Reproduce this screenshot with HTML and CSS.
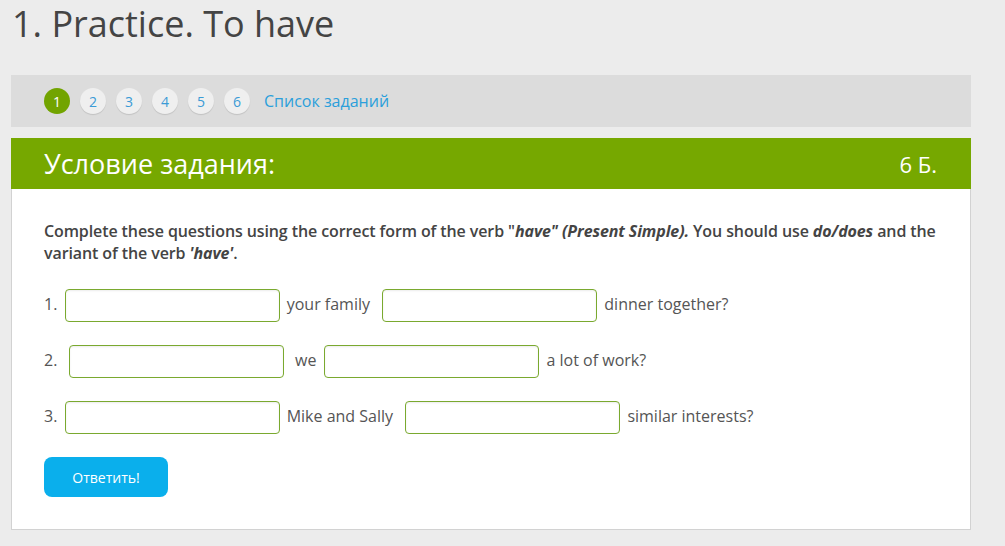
FILE: index.html
```html
<!doctype html>
<html lang="ru">

<head>
    <meta charset="UTF-8" />
    <meta name="viewport" content="width=device-width, initial-scale=1.0" />
    <title>1. Practice. To have</title>
    <link rel="stylesheet" href="styles.css">
</head>

<body>
    <div class="page">
        <h1 class="page-title">1. Practice. To have</h1>

        <!-- навигация по заданиям -->
        <div class="task-nav">
            <a class="task-num active" href="#">1</a>
            <a class="task-num" href="#">2</a>
            <a class="task-num" href="#">3</a>
            <a class="task-num" href="#">4</a>
            <a class="task-num" href="#">5</a>
            <a class="task-num" href="#">6</a>
            <a class="task-list" href="#">Список заданий</a>
        </div>

        <!-- условие -->
        <div class="task">
            <div class="task-header">
                <span class="task-title">Условие задания:</span>
                <span class="task-points">6 Б.</span>
            </div>
            <div class="task-body">
                <p class="task-text">Complete these questions using the correct form of the verb "<em>have" (Present Simple).</em> You should use <em>do/does</em> and the variant of the verb <em>'have'</em>.</p>

                <form class="task-form">
                    <div class="task-row">1. <input type="text" class="answer" /> your family <input type="text" class="answer" /> dinner together?</div>
                    <div class="task-row">2.&nbsp; <input type="text" class="answer" />&nbsp; we<input type="text" class="answer" /> a lot of work?</div>
                    <div class="task-row">3. <input type="text" class="answer" /> Mike and Sally <input type="text" class="answer" /> similar interests?</div>
                    <button type="button" class="submit">Ответить!</button>
                </form>
            </div>
        </div>
    </div>
</body>

</html>
```

FILE: styles.css
```css
*,
*::before,
*::after {
    box-sizing: border-box;
}

body {
    margin: 0;
    background: #ececec;
    font-family: 'Open Sans', 'Liberation Sans', sans-serif;
    color: #444;
}

.page {
    width: 960px;
    margin-left: 11px;
}

.page-title {
    margin: 0 0 27px 1px;
    font-size: 36px;
    line-height: 48px;
    font-weight: 400;
    color: #444;
}

/* nav */
.task-nav {
    display: flex;
    align-items: center;
    gap: 10px;
    height: 52px;
    padding-left: 33px;
    background: #dcdcdc;
}

.task-num {
    width: 26px;
    height: 26px;
    border-radius: 50%;
    display: flex;
    align-items: center;
    justify-content: center;
    font-size: 14px;
    text-decoration: none;
    color: #3b9bd6;
    background: #efefef;
    box-shadow: 0 1px 1px rgba(0, 0, 0, 0.12);
}

.task-num.active {
    background: #72a400;
    color: #fff;
    box-shadow: none;
}

.task-list {
    margin-left: 4px;
    font-size: 16px;
    color: #2b9fdb;
    text-decoration: none;
}

/* task */
.task {
    margin-top: 11px;
}

.task-header {
    display: flex;
    justify-content: space-between;
    align-items: center;
    height: 51px;
    padding: 0 34px 0 33px;
    background: #76a800;
    color: #fff;
}

.task-title {
    font-size: 27px;
}

.task-points {
    font-size: 22px;
}

.task-body {
    background: #fff;
    border: 1px solid #d2d2d2;
    border-top: 0;
    padding: 31px 20px 32px 32px;
}

.task-text {
    margin: 0 0 23px;
    font-size: 16px;
    line-height: 22px;
    font-weight: 600;
    letter-spacing: -0.1px;
    color: #444;
}

.task-text em {
    font-weight: 700;
}

.task-row {
    height: 33px;
    font-size: 16px;
    line-height: 34px;
    color: #555;
    margin-bottom: 23px;
    white-space: nowrap;
}

.answer {
    width: 215px;
    height: 33px;
    margin: 0 3px;
    vertical-align: middle;
    border: 1px solid #7aa92f;
    border-radius: 4px;
    background: #fff;
    box-shadow: inset 0 1px 2px rgba(0, 0, 0, 0.08);
    font-family: inherit;
    font-size: 16px;
}

.answer + .answer {
    margin-left: 8px;
}

.answer:focus {
    outline: 0;
}

.submit {
    margin-top: 2px;
    width: 124px;
    height: 40px;
    border: 0;
    border-radius: 8px;
    background: #0aafec;
    color: #fff;
    font-family: inherit;
    font-size: 14px;
    cursor: pointer;
}
```
